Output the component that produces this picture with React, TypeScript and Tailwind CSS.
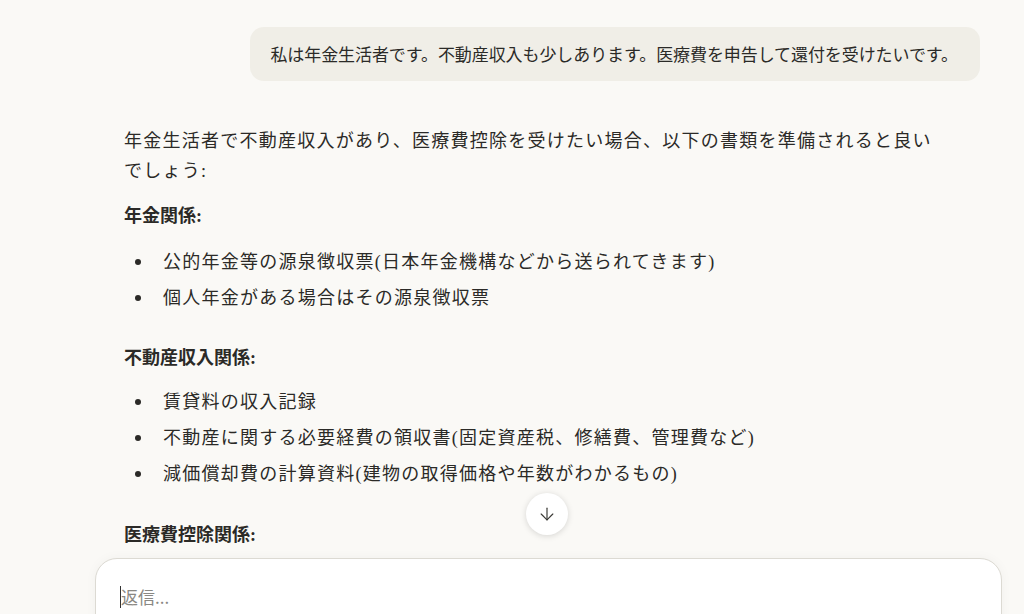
import { ArrowDown } from "lucide-react";

const serif = "font-['Liberation_Serif','Noto_Sans_CJK_JP',serif]";

function Bullet({ children }: { children: React.ReactNode }) {
  return (
    <li className="flex items-center h-[36px]">
      <span className="w-[39px] pl-[11px] flex items-center">
        <span className="block h-[6px] w-[6px] rounded-full bg-[#2b2a27]" />
      </span>
      <span>{children}</span>
    </li>
  );
}

export default function App() {
  return (
    <div className="relative h-[614px] w-[1024px] overflow-hidden bg-[#faf9f6] text-[#2b2a27]">
      <div className="flex flex-col pl-[124px] pr-[44px]">
        {/* user message */}
        <div className="flex justify-end pt-[27px]">
          <div className="h-[54px] rounded-[14px] bg-[#f0eee7] pl-[20px] pr-[22px] flex items-center text-[17px] font-['Noto_Sans_CJK_JP',sans-serif] text-[#2b2a27] tracking-[-0.08px]">
            私は年金生活者です。不動産収入も少しあります。医療費を申告して還付を受けたいです。
          </div>
        </div>

        {/* assistant reply */}
        <div className={`${serif} text-[18px] pt-[45px] w-[815px] tracking-[1.25px]`}>
          <p className="leading-[30px]">
            年金生活者で不動産収入があり、医療費控除を受けたい場合、以下の書類を準備されると良いでしょう:
          </p>
          <p className="mt-[15px] font-bold leading-[30px] tracking-normal">年金関係:</p>
          <ul className="mt-[13px]">
            <Bullet>公的年金等の源泉徴収票(日本年金機構などから送られてきます)</Bullet>
            <Bullet>個人年金がある場合はその源泉徴収票</Bullet>
          </ul>
          <p className="mt-[27px] font-bold leading-[30px] tracking-normal">不動産収入関係:</p>
          <ul className="mt-[11px]">
            <Bullet>賃貸料の収入記録</Bullet>
            <Bullet>不動産に関する必要経費の領収書(固定資産税、修繕費、管理費など)</Bullet>
            <Bullet>減価償却費の計算資料(建物の取得価格や年数がわかるもの)</Bullet>
          </ul>
          <p className="mt-[28px] font-bold leading-[30px] tracking-normal">医療費控除関係:</p>
        </div>
      </div>

      {/* scroll-down button */}
      <button className="absolute left-[526px] top-[493px] flex h-[42px] w-[42px] items-center justify-center rounded-full bg-white shadow-[0_1px_6px_rgba(0,0,0,0.15)]">
        <ArrowDown className="h-[20px] w-[20px] text-[#3a3935]" strokeWidth={1.4} />
      </button>

      {/* composer */}
      <div className="absolute left-[95px] top-[558px] h-[100px] w-[907px] rounded-[22px] border border-[#dcdad3] bg-white shadow-[0_0_12px_rgba(0,0,0,0.04)]">
        <div className="flex items-center pl-[24px] pt-[25px] text-[17px] font-['Noto_Sans_CJK_JP',sans-serif] text-[#8a8883]">
          <span className="h-[22px] w-px bg-[#333]" />
          <span>返信...</span>
        </div>
      </div>
    </div>
  );
}
